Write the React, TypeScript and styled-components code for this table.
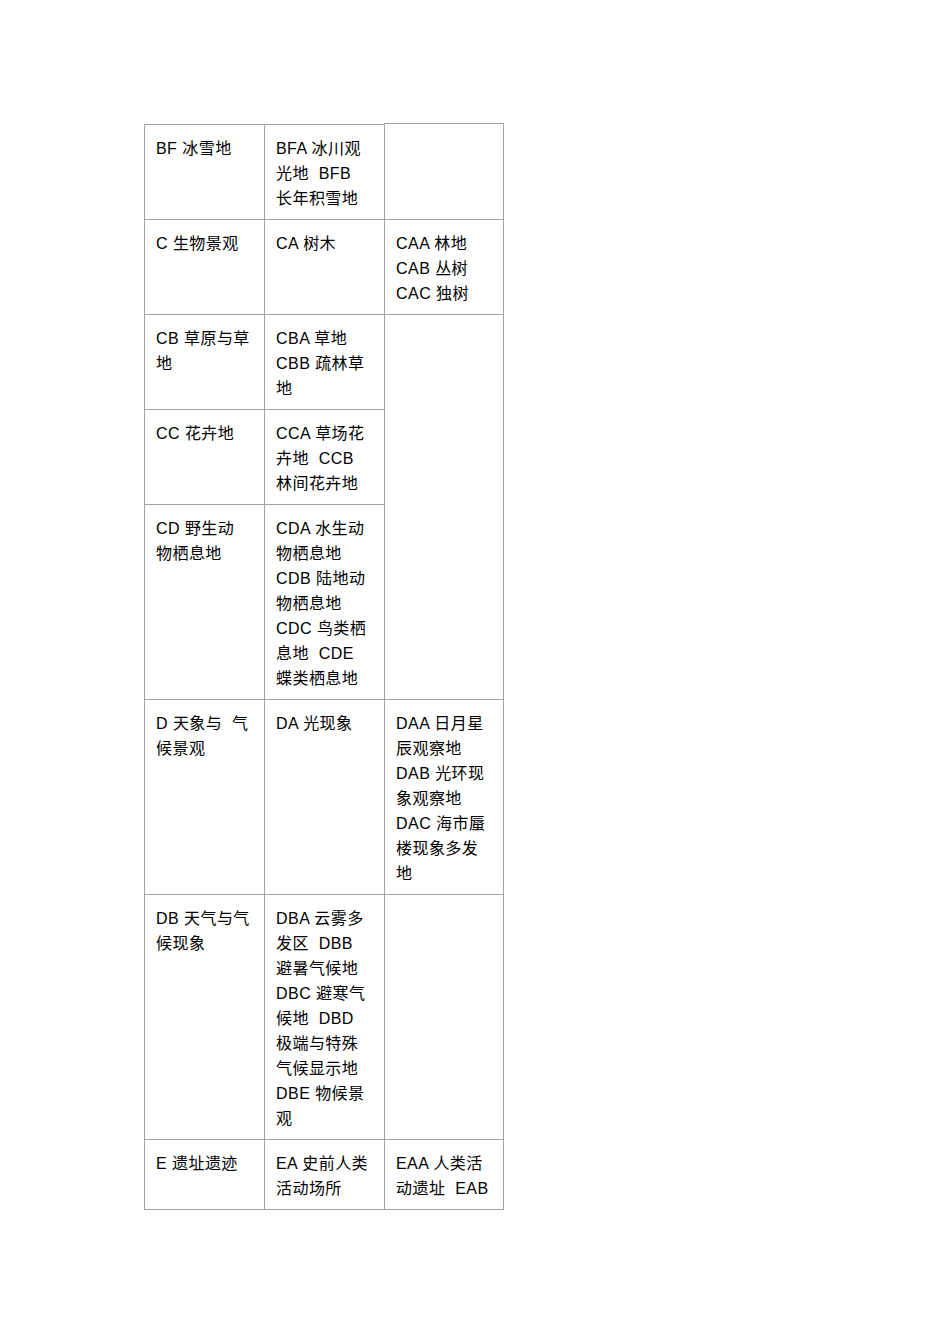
import { createGlobalStyle, styled } from 'styled-components';

type Cell = { lines: string[]; rowSpan?: number };
type Row = { height: number; cells: Cell[] };

const rows: Row[] = [
  {
    height: 95,
    cells: [
      { lines: ['BF 冰雪地'] },
      { lines: ['BFA 冰川观', '光地  BFB', '长年积雪地'] },
      { lines: [] },
    ],
  },
  {
    height: 95,
    cells: [
      { lines: ['C 生物景观'] },
      { lines: ['CA 树木'] },
      { lines: ['CAA 林地', 'CAB 丛树', 'CAC 独树'] },
    ],
  },
  {
    height: 95,
    cells: [
      { lines: ['CB 草原与草', '地'] },
      { lines: ['CBA 草地', 'CBB 疏林草', '地'] },
      { lines: [], rowSpan: 3 },
    ],
  },
  {
    height: 95,
    cells: [
      { lines: ['CC 花卉地'] },
      { lines: ['CCA 草场花', '卉地  CCB', '林间花卉地'] },
    ],
  },
  {
    height: 195,
    cells: [
      { lines: ['CD 野生动', '物栖息地'] },
      {
        lines: [
          'CDA 水生动',
          '物栖息地',
          'CDB 陆地动',
          '物栖息地',
          'CDC 鸟类栖',
          '息地  CDE',
          '蝶类栖息地',
        ],
      },
    ],
  },
  {
    height: 195,
    cells: [
      { lines: ['D 天象与  气', '候景观'] },
      { lines: ['DA 光现象'] },
      {
        lines: ['DAA 日月星', '辰观察地', 'DAB 光环现', '象观察地', 'DAC 海市蜃', '楼现象多发', '地'],
      },
    ],
  },
  {
    height: 243,
    cells: [
      { lines: ['DB 天气与气', '候现象'] },
      {
        lines: [
          'DBA 云雾多',
          '发区  DBB',
          '避暑气候地',
          'DBC 避寒气',
          '候地  DBD',
          '极端与特殊',
          '气候显示地',
          'DBE 物候景',
          '观',
        ],
      },
      { lines: [] },
    ],
  },
  {
    height: 69,
    cells: [
      { lines: ['E 遗址遗迹'] },
      { lines: ['EA 史前人类', '活动场所'] },
      { lines: ['EAA 人类活', '动遗址  EAB'] },
    ],
  },
];

export default function App() {
  return (
    <>
      <GlobalStyle />
      <Page>
        <Table>
          <colgroup>
            <col width={120} />
            <col width={120} />
            <col width={119} />
          </colgroup>
          <tbody>
            {rows.map((row, r) => (
              <Tr key={r} $height={row.height}>
                {row.cells.map((cell, c) => (
                  <Td key={c} rowSpan={cell.rowSpan} $raised={r === 0 && c === 2}>
                    {cell.lines.map((line, i) => (
                      <Line key={i}>{line}</Line>
                    ))}
                  </Td>
                ))}
              </Tr>
            ))}
          </tbody>
        </Table>
      </Page>
    </>
  );
}

const GlobalStyle = createGlobalStyle`
  html, body {
    margin: 0;
    background: #ffffff;
  }
  body {
    font-family: "Liberation Sans", Arial, "Noto Sans CJK SC", sans-serif;
    color: #000000;
  }
`;

const Page = styled.div`
  width: 950px;
  min-height: 1344px;
  padding: 124px 0 0 144px;
  box-sizing: border-box;
`;

const Table = styled.table`
  border-collapse: collapse;
  table-layout: fixed;
  width: 359px;
`;

const Tr = styled.tr<{ $height: number }>`
  height: ${(p) => p.$height}px;
`;

const Td = styled.td<{ $raised: boolean }>`
  position: relative;
  border: 1.4px solid #a3a3a3;
  padding: 11px 8px 8px 11px;
  vertical-align: top;
  font-size: 16px;
  line-height: 25px;
  letter-spacing: 0.45px;
  white-space: pre;

  ${(p) =>
    p.$raised &&
    `
    border-top-color: transparent;
    &::before {
      content: '';
      position: absolute;
      left: -1px;
      right: -1px;
      top: -2px;
      height: 1.4px;
      background: #a3a3a3;
    }
  `}
`;

const Line = styled.div`
  display: block;
  height: 25px;
`;
